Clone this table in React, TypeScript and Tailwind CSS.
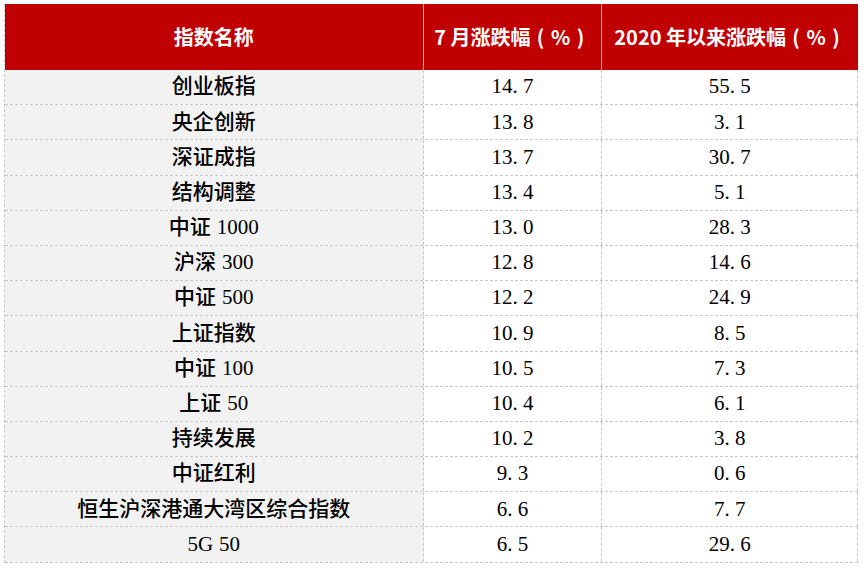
import React from "react";

const rows: [string, string, string][] = [
  ["创业板指", "14.7", "55.5"],
  ["央企创新", "13.8", "3.1"],
  ["深证成指", "13.7", "30.7"],
  ["结构调整", "13.4", "5.1"],
  ["中证 1000", "13.0", "28.3"],
  ["沪深 300", "12.8", "14.6"],
  ["中证 500", "12.2", "24.9"],
  ["上证指数", "10.9", "8.5"],
  ["中证 100", "10.5", "7.3"],
  ["上证 50", "10.4", "6.1"],
  ["持续发展", "10.2", "3.8"],
  ["中证红利", "9.3", "0.6"],
  ["恒生沪深港通大湾区综合指数", "6.6", "7.7"],
  ["5G 50", "6.5", "29.6"],
];

function Num({ text }: { text: string }) {
  return (
    <span className="flex items-center">
      {Array.from(text).map((ch, i) => (
        <span
          key={i}
          className={
            ch === "."
              ? "inline-block w-[10.5px] text-left"
              : "inline-block w-[10.5px] text-center"
          }
        >
          {ch}
        </span>
      ))}
    </span>
  );
}

function Name({ text }: { text: string }) {
  const idx = text.indexOf(" ");
  if (idx < 0) return <span>{text}</span>;
  return (
    <span className="flex items-center">
      <span>{text.slice(0, idx)}</span>
      <span className="inline-block w-[6px]" />
      <span>{text.slice(idx + 1)}</span>
    </span>
  );
}

function Pct() {
  return (
    <>
      <span className="inline-block w-[20px] text-center">(</span>
      <span className="inline-block w-[20px] text-center">%</span>
      <span className="inline-block w-[20px] text-center">)</span>
    </>
  );
}

export default function App() {
  return (
    <div className="w-[865px] h-[570px] bg-white pt-[4px] pl-[4px]">
      <div className="w-[854px] border-l border-dashed border-[#c6c6c6]">
        <div
          className="flex h-[66px] bg-[#c00000] text-white font-bold text-[20px]"
          style={{ fontFamily: '"Noto Sans CJK SC", "Noto Sans", sans-serif' }}
        >
          <div className="w-[419px] flex items-center justify-center border-r border-[#e9b5b5]">指数名称</div>
          <div className="w-[179px] flex items-center justify-center border-r border-[#e9b5b5]">
            <span>7 月涨跌幅</span>
            <Pct />
          </div>
          <div className="w-[256px] flex items-center justify-center">
            <span>2020 年以来涨跌幅</span>
            <Pct />
          </div>
        </div>
        {rows.map((r, i) => (
          <div
            key={i}
            className="flex h-[35.2px] text-black text-[21px] font-medium border-b border-dashed border-[#c6c6c6]"
            style={{ fontFamily: '"Liberation Serif", "Noto Sans CJK SC", serif' }}
          >
            <div className="w-[419px] bg-[#f2f2f2] flex items-center justify-center border-r border-dashed border-[#c6c6c6]">
              <Name text={r[0]} />
            </div>
            <div className="w-[179px] flex items-center justify-center border-r border-dashed border-[#c6c6c6]">
              <Num text={r[1]} />
            </div>
            <div className="w-[256px] flex items-center justify-center border-r border-dashed border-[#c6c6c6]">
              <Num text={r[2]} />
            </div>
          </div>
        ))}
      </div>
    </div>
  );
}
